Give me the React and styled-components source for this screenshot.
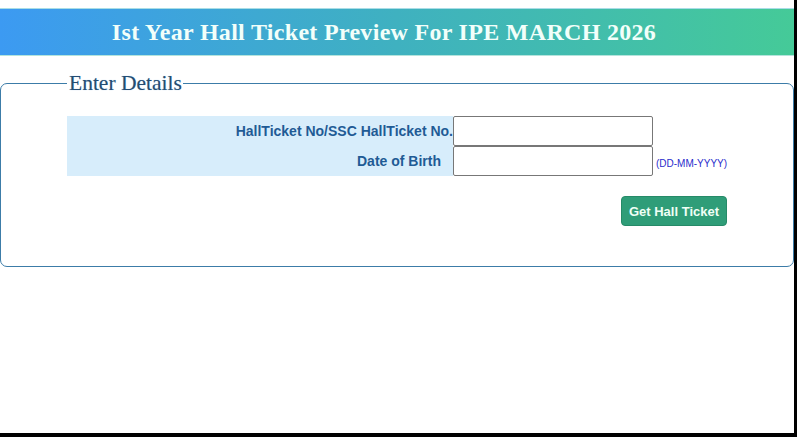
import React from "react";
import styled, { createGlobalStyle } from "styled-components";

const GlobalStyle = createGlobalStyle`
  html, body {
    margin: 0;
    padding: 0;
    background: #000;
  }
  body {
    font-family: "Liberation Sans", Arial, sans-serif;
  }
`

const Page = styled.div`
  width: 794px;
  height: 433px;
  background: #fff;
  padding-top: 8px;
  box-sizing: border-box;
  overflow: hidden;
`

const Header = styled.div`
  height: 46px;
  border-top: 1px solid #a9dde6;
  border-bottom: 1px solid #b4e4dc;
  background: linear-gradient(to right, #3c9af2, #3fb1c0 50%, #45ca98);
  display: flex;
  align-items: center;
  justify-content: center;
`

const Title = styled.h1`
  margin: 0 0 0 -26px;
  font-family: "Liberation Serif", "Times New Roman", serif;
  font-weight: bold;
  font-size: 24px;
  letter-spacing: 0.3px;
  color: #f2fffa;
`

const Box = styled.fieldset`
  margin: 15px 0 0 0;
  padding: 20px 0 40px 66px;
  border: 1px solid #3c7ca8;
  border-radius: 7px;
  min-width: 0;
`

const Legend = styled.legend`
  padding: 0 1px 0 2px;
  font-family: "Liberation Serif", "Times New Roman", serif;
  font-size: 21.5px;
  color: #244c72;
  text-shadow: 0 0 1px #9fc4e4;
`

const Form = styled.div`
  width: 660px;
`

const Grid = styled.div`
  display: grid;
  grid-template-columns: 386px 200px 1fr;
  grid-auto-rows: 30px;
`

const Label = styled.div`
  background: #d7edfb;
  display: flex;
  align-items: center;
  justify-content: flex-end;
  padding-right: ${p => p.$pad || 0}px;
  font-size: 14px;
  font-weight: bold;
  color: #1f5b95;
  white-space: nowrap;
`

const Input = styled.input`
  box-sizing: border-box;
  width: 200px;
  height: 30px;
  margin: 0;
  border: 1px solid #777;
  border-radius: 2px;
  padding: 2px 4px;
  font-size: 14px;
  background: #fff;
`

const Hint = styled.div`
  display: flex;
  align-items: center;
  padding: 4px 0 0 3px;
  font-size: 10px;
  color: #2a2ccc;
  white-space: nowrap;
`

const Actions = styled.div`
  display: flex;
  justify-content: flex-end;
  margin-top: 20px;
`

const Button = styled.button`
  height: 30px;
  width: 106px;
  padding: 0;
  border: 1px solid #268a68;
  border-radius: 4px;
  background: #2f9d78;
  color: #effff6;
  font-family: "Liberation Sans", Arial, sans-serif;
  font-size: 13px;
  font-weight: bold;
  cursor: pointer;
`

const App = () => {
    return (
        <Page>
            <GlobalStyle />
            <Header>
                <Title>Ist Year Hall Ticket Preview For IPE MARCH 2026</Title>
            </Header>
            <Box>
                <Legend>Enter Details</Legend>
                <Form>
                    <Grid>
                        <Label>HallTicket No/SSC HallTicket No.</Label>
                        <Input type="text" />
                        <span />
                        <Label $pad={12}>Date of Birth</Label>
                        <Input type="text" />
                        <Hint>(DD-MM-YYYY)</Hint>
                    </Grid>
                    <Actions>
                        <Button>Get Hall Ticket</Button>
                    </Actions>
                </Form>
            </Box>
        </Page>
    );
}

export default App;
